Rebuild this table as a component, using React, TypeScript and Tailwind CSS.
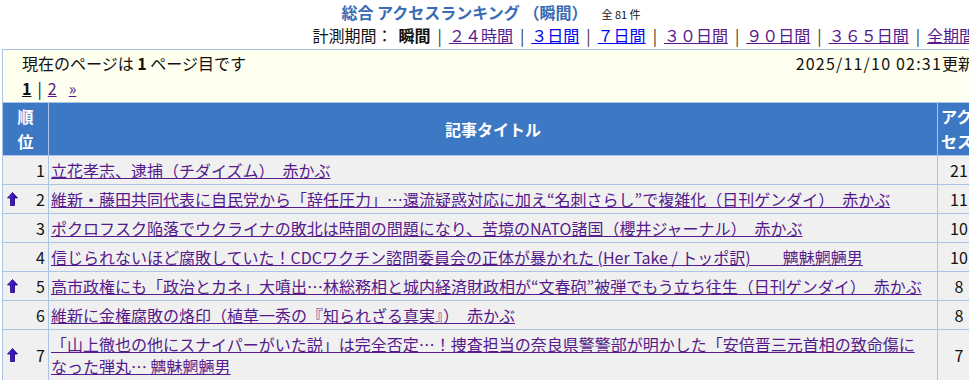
import React from 'react'

type Row = {
  rank: number
  up?: boolean
  title: React.ReactNode
  count: number
  tall?: boolean
}

const rows: Row[] = [
  { rank: 1, title: '立花孝志、逮捕（チダイズム）　赤かぶ', count: 21 },
  {
    rank: 2,
    up: true,
    title: '維新・藤田共同代表に自民党から「辞任圧力」…還流疑惑対応に加え“名刺さらし”で複雑化（日刊ゲンダイ）　赤かぶ',
    count: 11,
  },
  {
    rank: 3,
    title: 'ポクロフスク陥落でウクライナの敗北は時間の問題になり、苦境のNATO諸国（櫻井ジャーナル）　赤かぶ',
    count: 10,
  },
  {
    rank: 4,
    title: '信じられないほど腐敗していた！CDCワクチン諮問委員会の正体が暴かれた (Her Take / トッポ訳)　　魑魅魍魎男',
    count: 10,
  },
  {
    rank: 5,
    up: true,
    title: '高市政権にも「政治とカネ」大噴出…林総務相と城内経済財政相が“文春砲”被弾でもう立ち往生（日刊ゲンダイ）　赤かぶ',
    count: 8,
  },
  { rank: 6, title: '維新に金権腐敗の烙印（植草一秀の『知られざる真実』）　赤かぶ', count: 8 },
  {
    rank: 7,
    up: true,
    tall: true,
    title: (
      <>
        「山上徹也の他にスナイパーがいた説」は完全否定…！捜査担当の奈良県警警部が明かした「安倍晋三元首相の致命傷に
        <br />
        なった弾丸… 魑魅魍魎男
      </>
    ),
    count: 7,
  },
]

const periods = [
  { label: '２４時間', visited: true },
  { label: '３日間', visited: false },
  { label: '７日間', visited: false },
  { label: '３０日間', visited: true },
  { label: '９０日間', visited: true },
  { label: '３６５日間', visited: true },
  { label: '全期間', visited: true },
]

function UpArrow() {
  return (
    <svg width="11" height="14" viewBox="0 0 11 14" className="block">
      <defs>
        <linearGradient id="arw" x1="0" y1="0" x2="1" y2="0">
          <stop offset="0" stopColor="#5a2cf0" />
          <stop offset="1" stopColor="#22009a" />
        </linearGradient>
      </defs>
      <polygon
        points="5.5,0.5 10.5,6 7.5,6 7.5,13.5 3.5,13.5 3.5,6 0.5,6"
        fill="url(#arw)"
        stroke="#1c0078"
        strokeWidth="0.8"
      />
    </svg>
  )
}

export default function App() {
  return (
    <div className="w-[969px] h-[380px] overflow-hidden bg-white text-[#111] font-['Noto_Sans_CJK_JP','Noto_Sans',sans-serif]">
      <div className="ml-[2px] w-[978px]">
        {/* タイトル */}
        <div className="flex h-[24px] items-center justify-center">
          <span className="text-[16px] font-bold leading-[24px] text-[#3a6cb4]">総合 アクセスランキング （瞬間）</span>
          <span className="ml-[14px] mt-[3px] text-[11px] leading-[14px]">全 81 件</span>
        </div>

        {/* 計測期間 */}
        <div className="flex h-[24px] justify-end whitespace-nowrap pr-[5px] text-[16px] leading-[22px]">
          <span>計測期間： </span>
          <b className="ml-[6px]">瞬間</b>
          {periods.map((p) => (
            <span key={p.label}>
              <span className="mx-[7px] text-[#333]">|</span>
              <a
                href="#"
                className={`underline ${p.visited ? 'text-[#551a8b]' : 'text-[#0000ee]'}`}
              >
                {p.label}
              </a>
            </span>
          ))}
        </div>

        {/* ページ情報 */}
        <div className="mt-px border-x border-t border-[#a9c4e6] bg-[#fffff0] pb-px pl-[19px] pr-[5px] pt-px text-[16px] leading-[25px]">
          <div className="flex h-[25px] justify-between whitespace-nowrap">
            <span>
              現在のページは <b>1</b> ページ目です
            </span>
            <span>
              <span className="tracking-[1.2px]">2025/11/10 02:31</span>更新
            </span>
          </div>
          <div className="flex h-[25px] items-center">
            <b className="underline">1</b>
            <span className="mx-[6px]">|</span>
            <a href="#" className="text-[#551a8b] underline">2</a>
            <a href="#" className="ml-[12px] text-[#551a8b] underline">»</a>
          </div>
        </div>

        {/* ランキング表 */}
        <table className="w-[978px] table-fixed border-collapse text-[16px]">
          <colgroup>
            <col className="w-[46px]" />
            <col className="w-[889px]" />
            <col className="w-[43px]" />
          </colgroup>
          <thead>
            <tr className="h-[53px] bg-[#3d78c4] text-white leading-[25px]">
              <th className="border border-[#a9c4e6] p-0 text-center font-bold">
                順<br />位
              </th>
              <th className="border border-[#a9c4e6] p-0 text-center font-bold">記事タイトル</th>
              <th className="border border-[#a9c4e6] p-0 pl-[3px] text-left font-bold whitespace-nowrap">
                アク<br />セス
              </th>
            </tr>
          </thead>
          <tbody>
            {rows.map((r) => (
              <tr
                key={r.rank}
                className={`bg-[#f0f0f0] leading-[22px] ${r.tall ? 'h-[51px]' : 'h-[29px]'}`}
              >
                <td className="border border-[#a9c4e6] py-0 pl-[4px] pr-[3px]">
                  <div className="flex h-[22px] items-center justify-between">
                    <span className="w-[11px]">{r.up && <UpArrow />}</span>
                    <span>{r.rank}</span>
                  </div>
                </td>
                <td className="border border-[#a9c4e6] px-[2px] py-0">
                  <a href="#" className="text-[#551a8b] underline">
                    {r.title}
                  </a>
                </td>
                <td className="border border-[#a9c4e6] py-0 text-center">{r.count}</td>
              </tr>
            ))}
          </tbody>
        </table>
      </div>
    </div>
  )
}
